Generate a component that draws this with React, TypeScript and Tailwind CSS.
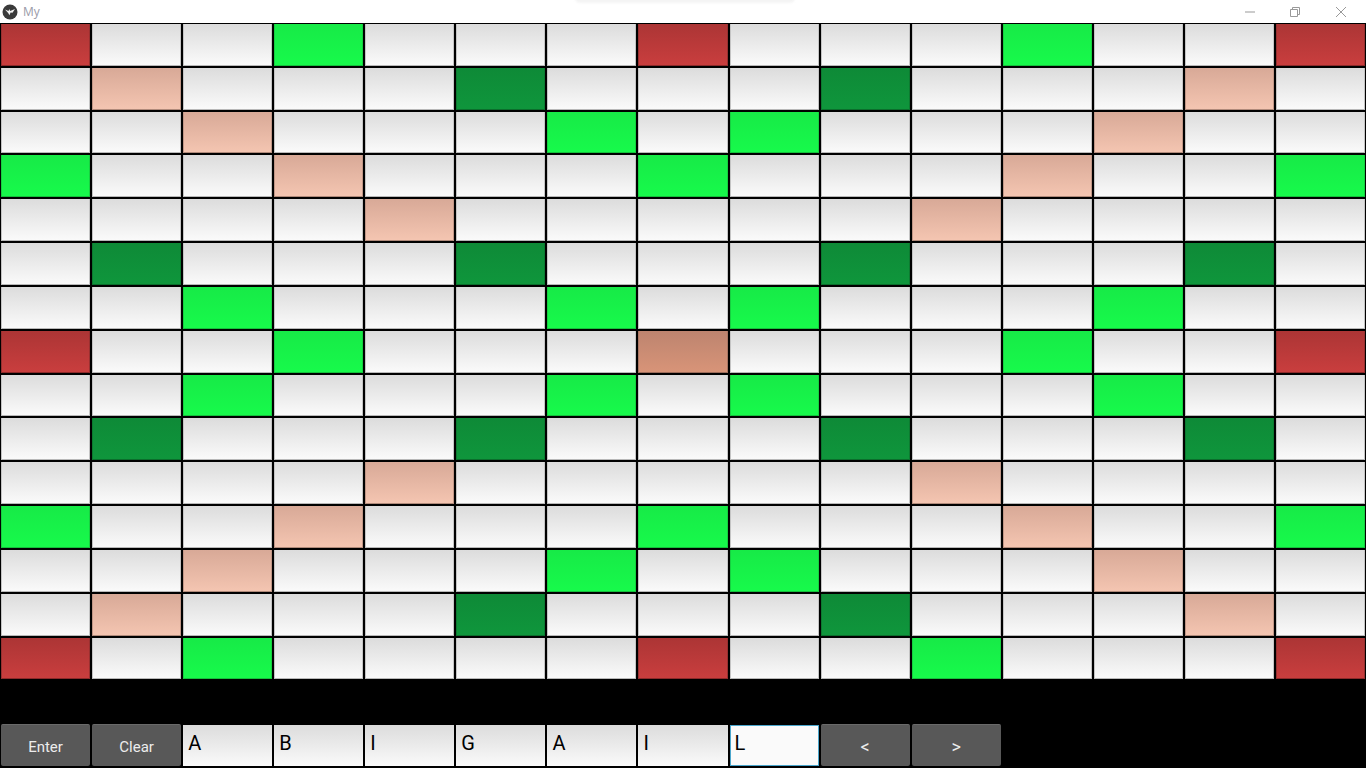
const board = [
  "R..G...R...G..R",
  ".P...D...D...P.",
  "..P...G.G...P..",
  "G..P...G...P..G",
  "....P.....P....",
  ".D...D...D...D.",
  "..G...G.G...G..",
  "R..G...S...G..R",
  "..G...G.G...G..",
  ".D...D...D...D.",
  "....P.....P....",
  "G..P...G...P..G",
  "..P...G.G...P..",
  ".P...D...D...P.",
  "R.G....R..G...R",
]

const cellStyles: Record<string, string> = {
  ".": "from-[#dcdcdc] to-[#fafafa] border-b-[#b8b8b8] border-x-[#c4c4c4]",
  R: "from-[#ac3535] to-[#c93e3e] border-b-[#8c2a2a] border-x-[#983030]",
  P: "from-[#d8a997] to-[#f4c5b1] border-b-[#b08a7a] border-x-[#c09686]",
  G: "from-[#17ea47] to-[#17fa4b] border-b-[#14c03c] border-x-[#15d040]",
  D: "from-[#0e8a37] to-[#0f963c] border-b-[#0b6e2c] border-x-[#0c7a30]",
  S: "from-[#bd846f] to-[#d89478] border-b-[#9c6c5a] border-x-[#a87562]",
}

const letters = ["A", "B", "I", "G", "A", "I"]

function ActionButton({ label, big }: { label: string; big?: boolean }) {
  return (
    <button
      className={`mx-px mb-[2px] flex items-center justify-center rounded-[2px] border-t border-[#6a6a6a] bg-[#585858] pt-[3px] font-['Roboto',sans-serif] leading-[18px] text-[#ececec] ${
        big ? "text-[18px]" : "text-[15px]"
      }`}
    >
      {label}
    </button>
  )
}

function LetterInput({ value, focused }: { value: string; focused?: boolean }) {
  return (
    <div
      className={
        focused
          ? "mx-px mb-[2px] mt-px border border-[#4aa6cc] bg-[#fafafa] pl-[4px] pt-[5px] font-['Roboto',sans-serif] text-[20px] leading-[24px] text-black"
          : "mx-px mb-[2px] mt-px bg-gradient-to-b from-[#dcdcdc] to-[#fafafa] pl-[5px] pt-[6px] font-['Roboto',sans-serif] text-[20px] leading-[24px] text-black"
      }
    >
      {value}
    </div>
  )
}

export default function App() {
  return (
    <div className="relative flex h-[768px] w-[1366px] flex-col overflow-hidden bg-black">
      {/* title bar */}
      <div className="relative flex h-[23px] shrink-0 items-center bg-white">
        <svg className="ml-[2px] h-[16px] w-[16px]" viewBox="0 0 16 16">
          <circle cx="8" cy="8" r="7.5" fill="#3a3a3a" />
          <path d="M3 5.5 L6.5 7 L7.2 5 L8.2 7 L13 5 L10.5 8.8 L8.6 8.6 L7.4 11.2 L6.2 9 Z" fill="#f2f2f2" />
        </svg>
        <span className="ml-[5px] font-['Open_Sans',sans-serif] text-[12px] text-[#9a9aa8]">My</span>
        <div className="absolute left-[575px] top-[-2px] h-[5px] w-[220px] rounded-b-lg bg-[#f4f4f4] blur-[1px]" />
        <div className="ml-auto flex items-center">
          <svg className="mr-[35px] h-[10px] w-[10px]" viewBox="0 0 10 10">
            <path d="M0 5 H10" stroke="#999999" fill="none" />
          </svg>
          <svg className="mr-[36px] h-[10px] w-[10px]" viewBox="0 0 10 10">
            <path d="M0.5 2.5 H7.5 V9.5 H0.5 Z M2.5 2.5 V0.5 H9.5 V7.5 H7.5" stroke="#999999" fill="none" />
          </svg>
          <svg className="mr-[20px] h-[10px] w-[10px]" viewBox="0 0 10 10">
            <path d="M0 0 L10 10 M10 0 L0 10" stroke="#999999" fill="none" />
          </svg>
        </div>
      </div>

      {/* board + input row share one 15 x 17 grid */}
      <div className="grid flex-1 grid-cols-[repeat(15,1fr)] grid-rows-[repeat(17,1fr)]">
        {board.flatMap((row, r) =>
          row.split("").map((c, i) => (
            <div key={`${r}-${i}`} className={`mx-px my-px border-x border-b bg-gradient-to-b ${cellStyles[c]}`} />
          )),
        )}
        <div className="col-span-15" />
        <ActionButton label="Enter" />
        <ActionButton label="Clear" />
        {letters.map((l, i) => (
          <LetterInput key={i} value={l} />
        ))}
        <LetterInput value="L" focused />
        <ActionButton label="<" big />
        <ActionButton label=">" big />
      </div>
    </div>
  )
}
